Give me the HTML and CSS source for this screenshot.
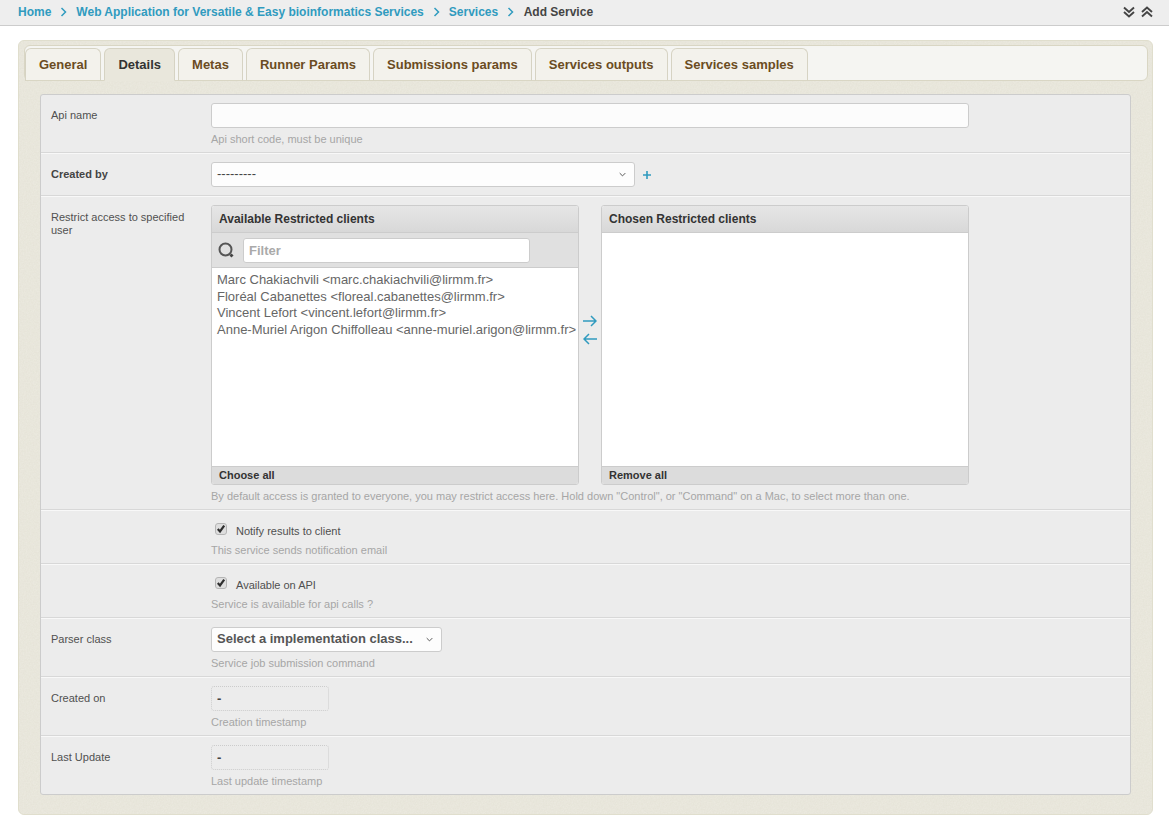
FILE: index.html
```html
<!DOCTYPE html>
<html lang="en">
<head>
<meta charset="utf-8">
<title>Add Service</title>
<link rel="stylesheet" href="styles.css">
</head>
<body>
<header class="topbar">
  <nav class="crumbs">
    <a class="crumb-link">Home</a>
    <svg class="crumb-sep" viewBox="0 0 7 10"><path d="M1.5 1l4 4-4 4"/></svg>
    <a class="crumb-link">Web Application for Versatile &amp; Easy bioinformatics Services</a>
    <svg class="crumb-sep" viewBox="0 0 7 10"><path d="M1.5 1l4 4-4 4"/></svg>
    <a class="crumb-link">Services</a>
    <svg class="crumb-sep" viewBox="0 0 7 10"><path d="M1.5 1l4 4-4 4"/></svg>
    <span class="crumb-current">Add Service</span>
  </nav>
  <div class="collapse-tools">
    <svg class="collapse-icon" viewBox="0 0 12 12"><path d="M1 1.5l5 4.5 5-4.5M1 6l5 4.5L11 6"/></svg>
    <svg class="collapse-icon" viewBox="0 0 12 12"><path d="M1 6l5-4.5L11 6M1 10.5L6 6l5 4.5"/></svg>
  </div>
</header>

<main class="panel">
  <ul class="tabs">
    <li class="tab">General</li>
    <li class="tab tab-active">Details</li>
    <li class="tab">Metas</li>
    <li class="tab">Runner Params</li>
    <li class="tab">Submissions params</li>
    <li class="tab">Services outputs</li>
    <li class="tab">Services samples</li>
  </ul>

  <form class="module">
    <div class="row">
      <label class="row-label">Api name</label>
      <div class="row-field">
        <input class="text-input" type="text">
        <p class="help">Api short code, must be unique</p>
      </div>
    </div>

    <div class="row row-created">
      <label class="row-label row-label-strong">Created by</label>
      <div class="row-field field-inline">
        <div class="select select-wide"><span>---------</span>
          <svg class="select-arrow" viewBox="0 0 10 6"><path d="M1 1l4 4 4-4"/></svg>
        </div>
        <svg class="add-icon" viewBox="0 0 8 8"><path d="M4 0v8M0 4h8"/></svg>
      </div>
    </div>

    <div class="row row-restrict">
      <label class="row-label">Restrict access to specified user</label>
      <div class="row-field">
        <div class="selector">
          <div class="chooser">
            <h2 class="chooser-title">Available Restricted clients</h2>
            <div class="chooser-filter">
              <svg class="lens" viewBox="0 0 16 17"><circle cx="7.5" cy="7.5" r="6"/><path class="lens-handle" d="M12.5 12.5l2 2"/></svg>
              <input class="filter-input" type="text" placeholder="Filter">
            </div>
            <div class="chooser-list">
              <div class="option">Marc Chakiachvili &lt;marc.chakiachvili@lirmm.fr&gt;</div>
              <div class="option">Floréal Cabanettes &lt;floreal.cabanettes@lirmm.fr&gt;</div>
              <div class="option">Vincent Lefort &lt;vincent.lefort@lirmm.fr&gt;</div>
              <div class="option">Anne-Muriel Arigon Chiffolleau &lt;anne-muriel.arigon@lirmm.fr&gt;</div>
            </div>
            <div class="chooser-foot">Choose all</div>
          </div>
          <div class="mover">
            <svg class="move-icon" viewBox="0 0 14 12"><path d="M0 6h13M8 1l5 5-5 5"/></svg>
            <svg class="move-icon" viewBox="0 0 14 12"><path d="M14 6H1M6 1L1 6l5 5"/></svg>
          </div>
          <div class="chooser">
            <h2 class="chooser-title">Chosen Restricted clients</h2>
            <div class="chooser-list"></div>
            <div class="chooser-foot">Remove all</div>
          </div>
        </div>
        <p class="help help-selector">By default access is granted to everyone, you may restrict access here. Hold down "Control", or "Command" on a Mac, to select more than one.</p>
      </div>
    </div>

    <div class="row row-check">
      <div class="row-label"></div>
      <div class="row-field">
        <label class="check-line">
          <svg class="checkbox" viewBox="0 0 12 12"><rect x=".5" y=".5" width="11" height="11" rx="2.5"/><path d="M2.8 6l2.2 2.4L9.2 2.6"/></svg>
          <span>Notify results to client</span>
        </label>
        <p class="help help-check">This service sends notification email</p>
      </div>
    </div>

    <div class="row row-check">
      <div class="row-label"></div>
      <div class="row-field">
        <label class="check-line">
          <svg class="checkbox" viewBox="0 0 12 12"><rect x=".5" y=".5" width="11" height="11" rx="2.5"/><path d="M2.8 6l2.2 2.4L9.2 2.6"/></svg>
          <span>Available on API</span>
        </label>
        <p class="help help-check">Service is available for api calls ?</p>
      </div>
    </div>

    <div class="row">
      <label class="row-label">Parser class</label>
      <div class="row-field">
        <div class="select select-parser"><span>Select a implementation class...</span>
          <svg class="select-arrow" viewBox="0 0 10 6"><path d="M1 1l4 4 4-4"/></svg>
        </div>
        <p class="help">Service job submission command</p>
      </div>
    </div>

    <div class="row">
      <label class="row-label">Created on</label>
      <div class="row-field">
        <div class="readonly">-</div>
        <p class="help">Creation timestamp</p>
      </div>
    </div>

    <div class="row row-last">
      <label class="row-label">Last Update</label>
      <div class="row-field">
        <div class="readonly">-</div>
        <p class="help">Last update timestamp</p>
      </div>
    </div>
  </form>
</main>
</body>
</html>
```

FILE: styles.css
```css
* { box-sizing: border-box; }

html, body { height: 815px; overflow: hidden; }

body {
  margin: 0;
  background: #fff;
  color: #444;
  font: 11px/14px "Liberation Sans", Arial, sans-serif;
}

.topbar {
  display: flex;
  justify-content: space-between;
  align-items: center;
  height: 26px;
  padding: 0 16px 2px 18px;
  background: #eee;
  border-bottom: 1px solid #ccc;
}

.crumbs {
  display: flex;
  align-items: center;
  font-size: 12px;
  font-weight: bold;
}

.crumb-link { color: #309bbf; }
.crumb-current { color: #444; margin-left: .5px; }

.crumb-sep {
  width: 7px;
  height: 10px;
  margin: 1px 9px 0 9px;
  fill: none;
  stroke: #309bbf;
  stroke-width: 1.5;
}

.collapse-tools { display: flex; gap: 6px; }

.collapse-icon {
  width: 12px;
  height: 12px;
  fill: none;
  stroke: #444;
  stroke-width: 1.9;
}

.panel {
  height: 775px;
  margin: 14px 16px 0 18px;
  padding: 4px 4px 0 5px;
  background: #ebe9df;
  background-image: url("data:image/svg+xml,%3Csvg xmlns='http://www.w3.org/2000/svg' width='200' height='200'%3E%3Cfilter id='n'%3E%3CfeTurbulence type='fractalNoise' baseFrequency='.7' numOctaves='2'/%3E%3CfeColorMatrix values='0 0 0 0 .55 0 0 0 0 .53 0 0 0 0 .4 0 0 0 .2 -.03'/%3E%3C/filter%3E%3Crect width='200' height='200' filter='url(%23n)'/%3E%3C/svg%3E");
  border: 1px solid #e0decd;
  border-radius: 6px;
}

.tabs {
  display: flex;
  align-items: flex-end;
  gap: 3px;
  height: 36px;
  margin: 0 0 13px;
  padding: 3px 0 0;
  list-style: none;
  background: #f5f5f2;
  border: 1px solid #d9d6c4;
  border-radius: 6px;
}

.tab {
  height: 33px;
  margin-bottom: -1px;
  padding: 0 13px;
  background: #f3f2ec;
  border: 1px solid #d6d3c3;
  border-bottom-color: #d9d6c4;
  border-radius: 6px 6px 0 0;
  color: #6b4c22;
  font-size: 13px;
  font-weight: bold;
  line-height: 31px;
}

.tab-active {
  background: #e9e7dc;
  border-bottom-color: #e9e7dc;
  color: #333;
}

.module {
  margin: 0 17px 0 16px;
  height: 701px;
  background: #ececec;
  border: 1px solid #ccc;
  border-radius: 3px;
}

.row {
  display: flex;
  padding: 8px 10px 0;
  height: 58px;
  border-bottom: 1px solid #d8d8d8;
  box-shadow: 0 1px 0 #f8f8f8;
  margin-bottom: 1px;
}

.row-created { height: 42px; }
.row-restrict { height: 313px; }
.row-check { height: 53px; }
.row-last { height: 57px; border-bottom: 0; box-shadow: none; margin-bottom: 0; }

.row-label {
  flex: 0 0 160px;
  padding: 6px 20px 0 0;
  color: #505050;
  line-height: 13px;
}

.row-label-strong { color: #444; font-weight: bold; }

.row-field { flex: 1; min-width: 0; }
.field-inline { display: flex; align-items: center; align-self: flex-start; }

.help {
  margin: 4px 0 0;
  color: #a6a6a6;
  line-height: 14px;
}

.help-selector { margin-top: 4px; }
.help-check { margin-top: 6px; }

.text-input {
  display: block;
  width: 758px;
  height: 25px;
  background: #fcfcfc;
  border: 1px solid #ccc;
  border-radius: 3px;
}

.select {
  display: flex;
  align-items: center;
  justify-content: space-between;
  height: 25px;
  padding: 0 8px 0 5px;
  background: #fdfdfd;
  border: 1px solid #ccc;
  border-radius: 3px;
  color: #444;
  font-size: 13px;
  line-height: 22px;
}

.select span { margin-top: -2px; }

.select-wide { width: 424px; }
.select-parser { width: 231px; color: #555; font-weight: bold; }

.select-arrow {
  width: 7px;
  height: 5px;
  fill: none;
  stroke: #555;
  stroke-width: 1.4;
}

.add-icon {
  width: 8px;
  height: 8px;
  margin-left: 8px;
  stroke: #309bbf;
  stroke-width: 1.6;
}

.selector {
  display: flex;
  align-items: flex-start;
}

.chooser {
  display: flex;
  flex-direction: column;
  width: 368px;
  height: 280px;
  border: 1px solid #ccc;
  border-radius: 3px;
  background: #fff;
  overflow: hidden;
}

.chooser-title {
  flex: 0 0 27px;
  margin: 0;
  padding: 0 7px;
  background: linear-gradient(#e6e6e6, #d8d8d8);
  border-bottom: 1px solid #ccc;
  color: #333;
  font-size: 12px;
  font-weight: bold;
  line-height: 26px;
}

.chooser-filter {
  display: flex;
  align-items: center;
  flex: 0 0 35px;
  padding: 0 0 0 6px;
  background: #e0e0e0;
  border-bottom: 1px solid #ccc;
}

.lens {
  width: 16px;
  height: 17px;
  margin-right: 9px;
  fill: none;
  stroke: #555;
  stroke-width: 2;
}

.lens-handle { stroke-width: 3; stroke: #444; }

.filter-input {
  width: 287px;
  height: 25px;
  padding: 0 5px;
  background: #fff;
  border: 1px solid #ccc;
  border-radius: 3px;
  font: bold 13px "Liberation Sans", Arial, sans-serif;
}

.filter-input::placeholder { color: #aaa; opacity: 1; }

.chooser-list {
  flex: 1;
  padding: 4px 0 0 5px;
  background: #fff;
  color: #666;
  font-size: 13px;
  white-space: nowrap;
}

.option { height: 16.6px; line-height: 16px; }

.chooser-foot {
  flex: 0 0 18px;
  padding: 0 7px;
  background: #dcdcdc;
  border-top: 1px solid #ccc;
  color: #333;
  font-weight: bold;
  line-height: 17px;
}

.mover {
  display: flex;
  flex-direction: column;
  align-items: center;
  gap: 6px;
  width: 22px;
  padding-top: 110px;
}

.move-icon {
  width: 14px;
  height: 12px;
  fill: none;
  stroke: #309bbf;
  stroke-width: 1.5;
}

.check-line {
  display: flex;
  align-items: flex-start;
  height: 18px;
  padding: 4px 0 0 4px;
}

.check-line span { margin: 1px 0 0 9px; color: #505050; }

.checkbox { width: 12px; height: 12px; flex: none; }
.checkbox rect { fill: #dedede; stroke: #b5b5b5; }
.checkbox path { fill: none; stroke: #2e2e2e; stroke-width: 2.2; }

.readonly {
  width: 118px;
  height: 25px;
  padding: 0 5px;
  border: 1px dotted #ccc;
  border-radius: 3px;
  color: #444;
  font-size: 13px;
  font-weight: bold;
  line-height: 24px;
}
```
